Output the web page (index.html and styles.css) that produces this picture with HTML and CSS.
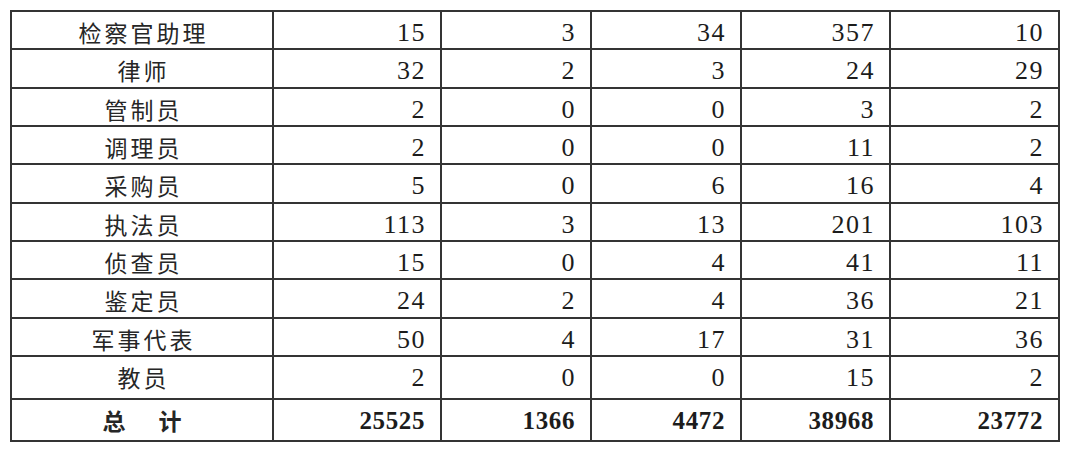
FILE: index.html
```html
<!DOCTYPE html>
<html lang="zh-CN">
<head>
<meta charset="utf-8">
<title>统计表</title>
<link rel="stylesheet" href="styles.css">
</head>
<body>
<table class="stats">
  <colgroup>
    <col class="c-name">
    <col class="c-a">
    <col class="c-b">
    <col class="c-c">
    <col class="c-d">
    <col class="c-e">
  </colgroup>
  <tbody>
    <tr><td class="name">检察官助理</td><td>15</td><td>3</td><td>34</td><td>357</td><td>10</td></tr>
    <tr><td class="name">律师</td><td>32</td><td>2</td><td>3</td><td>24</td><td>29</td></tr>
    <tr><td class="name">管制员</td><td>2</td><td>0</td><td>0</td><td>3</td><td>2</td></tr>
    <tr><td class="name">调理员</td><td>2</td><td>0</td><td>0</td><td>11</td><td>2</td></tr>
    <tr><td class="name">采购员</td><td>5</td><td>0</td><td>6</td><td>16</td><td>4</td></tr>
    <tr><td class="name">执法员</td><td>113</td><td>3</td><td>13</td><td>201</td><td>103</td></tr>
    <tr><td class="name">侦查员</td><td>15</td><td>0</td><td>4</td><td>41</td><td>11</td></tr>
    <tr><td class="name">鉴定员</td><td>24</td><td>2</td><td>4</td><td>36</td><td>21</td></tr>
    <tr><td class="name">军事代表</td><td>50</td><td>4</td><td>17</td><td>31</td><td>36</td></tr>
    <tr class="tall"><td class="name">教员</td><td>2</td><td>0</td><td>0</td><td>15</td><td>2</td></tr>
    <tr class="total"><td class="name">总　计</td><td>25525</td><td>1366</td><td>4472</td><td>38968</td><td>23772</td></tr>
  </tbody>
</table>
</body>
</html>
```
FILE: styles.css
```css
html, body {
  margin: 0;
  padding: 0;
  background: #ffffff;
}

body {
  padding: 10px 0 0 10px;
}

.stats {
  border-collapse: collapse;
  table-layout: fixed;
  width: 1050px;
  color: #1c1c1c;
}

.c-name { width: 262px; }
.c-a { width: 168px; }
.c-b { width: 150px; }
.c-c { width: 150px; }
.c-d { width: 149px; }
.c-e { width: 169px; }

.stats tr { height: 38.33px; }
.stats tr.tall { height: 43px; }
.stats tr.total { height: 42px; }

.stats td {
  border: 2px solid #343434;
  vertical-align: top;
  padding: 6px 14px 0 0;
  text-align: right;
  font-family: "Liberation Serif", "Times New Roman", serif;
  font-size: 26px;
  letter-spacing: 1.5px;
  line-height: 30px;
  white-space: nowrap;
  overflow: hidden;
}

.stats td.name {
  text-align: center;
  padding: 5px 0 0 3px;
  font-family: "Noto Sans CJK SC", "Noto Sans", sans-serif;
  font-size: 23px;
  letter-spacing: 3px;
  color: #262626;
}

.stats tr.total td {
  font-weight: bold;
  font-size: 25px;
  letter-spacing: 0.6px;
  padding-right: 15px;
}

.stats tr.total td.name {
  font-size: 23px;
  letter-spacing: 5px;
  padding-left: 5px;
  padding-right: 0;
}
```
